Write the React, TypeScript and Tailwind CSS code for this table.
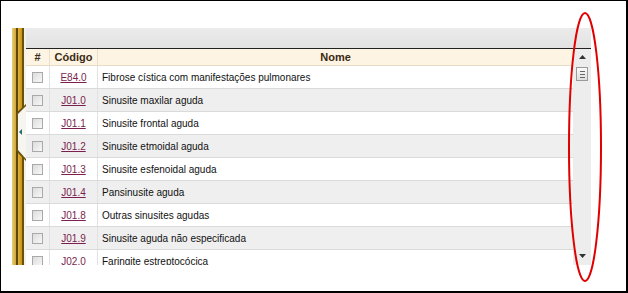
import React from 'react'

const rows = [
  { code: 'E84.0', name: 'Fibrose cística com manifestações pulmonares' },
  { code: 'J01.0', name: 'Sinusite maxilar aguda' },
  { code: 'J01.1', name: 'Sinusite frontal aguda' },
  { code: 'J01.2', name: 'Sinusite etmoidal aguda' },
  { code: 'J01.3', name: 'Sinusite esfenoidal aguda' },
  { code: 'J01.4', name: 'Pansinusite aguda' },
  { code: 'J01.8', name: 'Outras sinusites agudas' },
  { code: 'J01.9', name: 'Sinusite aguda não especificada' },
  { code: 'J02.0', name: 'Faringite estreptocócica' },
]

function Checkbox() {
  return (
    <div className="h-[11px] w-[11px] border border-[#a9a9a9] bg-gradient-to-br from-[#dcdcdc] to-[#f8f8f8]" />
  )
}

function GoldBar() {
  return (
    <div className="relative flex h-full w-[14px] shrink-0">
      <div className="w-[4px] bg-gradient-to-r from-[#e8cf72] to-[#cfa43a]" />
      <div className="w-[2px] bg-[#5e4708]" />
      <div className="w-[4px] bg-gradient-to-r from-[#e2b234] to-[#c8951a]" />
      <div className="w-[2px] bg-[#6a520e]" />
      <div className="w-[2px] bg-[#f4f1e6]" />
      {/* collapse tab */}
      <svg className="absolute left-0 top-[76px]" width="14" height="58" viewBox="0 0 14 58">
        <polygon points="14,0 4,9 4,47 14,57" fill="#6a520e" />
        <polygon points="14,2 6,10 6,46 14,55" fill="#f7f5ef" />
        <polygon points="7,28 10,25 10,31" fill="#1f6f6a" />
      </svg>
    </div>
  )
}

function Scrollbar() {
  return (
    <div className="flex w-[18px] shrink-0 flex-col items-center bg-[#ededed] pt-[6px]">
      <svg width="7" height="4" viewBox="0 0 7 4">
        <polygon points="0,4 3.5,0 7,4" fill="#333" />
      </svg>
      <div className="mt-[8px] flex h-[14px] w-[12px] flex-col items-center justify-center gap-[2px] border border-[#9a9a9a] bg-gradient-to-b from-[#fafafa] to-[#dedede]">
        <div className="h-px w-[5px] bg-[#666]" />
        <div className="h-px w-[5px] bg-[#666]" />
        <div className="h-px w-[5px] bg-[#666]" />
      </div>
      <div className="flex-1" />
      <svg className="mb-[7px]" width="7" height="4" viewBox="0 0 7 4">
        <polygon points="0,0 3.5,4 7,0" fill="#333" />
      </svg>
    </div>
  )
}

export default function App() {
  return (
    <div
      className="relative h-[293px] w-[628px] overflow-hidden border-b-2 border-l border-r-2 border-t border-black bg-white pl-[11px] pt-[27px]"
      style={{ fontFamily: '"Liberation Sans", Arial, sans-serif' }}
    >
      <div className="flex h-[237px] w-[579px]">
        <GoldBar />
        <div className="flex min-w-0 flex-1 flex-col">
          <div className="h-[20px] shrink-0 bg-gradient-to-b from-[#ececec] to-[#e2e2e2]" />
          <div className="h-px shrink-0 bg-[#222]" />
          <div className="flex min-h-0 flex-1">
            <div className="flex min-w-0 flex-1 flex-col overflow-hidden">
              <div className="flex h-[17px] shrink-0 items-center border-b border-[#e6dcc6] bg-[#fdf4e3] text-[11px] font-bold text-[#3a2a14]">
                <div className="flex h-full w-[24px] items-center justify-center border-r border-[#eadfca]">#</div>
                <div className="flex h-full w-[48px] items-center justify-center border-r border-[#eadfca]">Código</div>
                <div className="flex h-full flex-1 items-center justify-center">Nome</div>
              </div>
              {rows.map((r, i) => (
                <div
                  key={r.code}
                  className={`flex h-[23px] shrink-0 items-center border-b border-[#dadada] text-[10px] text-[#111] ${
                    i % 2 === 1 ? 'bg-[#efefef]' : 'bg-white'
                  }`}
                >
                  <div className="flex h-full w-[24px] items-center justify-center border-r border-[#e2e2e2]">
                    <Checkbox />
                  </div>
                  <div className="flex h-full w-[48px] items-center justify-center border-r border-[#e2e2e2]">
                    <a className="text-[#7a1f50] underline">{r.code}</a>
                  </div>
                  <div className="flex h-full flex-1 items-center pl-[4px]">{r.name}</div>
                </div>
              ))}
            </div>
            <Scrollbar />
          </div>
        </div>
      </div>
      {/* red highlight ellipse */}
      <svg className="pointer-events-none absolute left-0 top-0" width="628" height="293">
        <ellipse cx="584" cy="146" rx="16" ry="134" fill="none" stroke="#e00000" strokeWidth="2" />
      </svg>
    </div>
  )
}
